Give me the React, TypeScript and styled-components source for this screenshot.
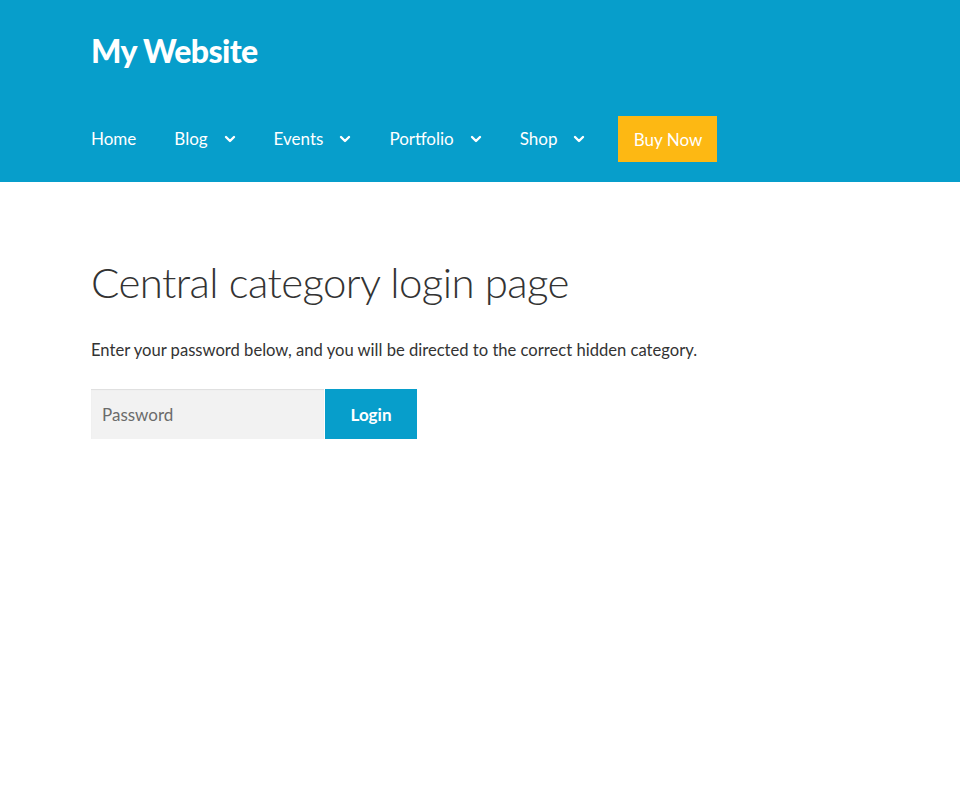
import styled, { createGlobalStyle } from "styled-components";

const GlobalStyle = createGlobalStyle`
    html, body {
        margin: 0;
        padding: 0;
        background: #ffffff;
        font-family: Lato, "Noto Sans", sans-serif;
        color: #333333;
    }
`;

const Header = styled.header`
    background: #079ecb;
    height: 182px;
    padding: 0 91px;
    box-sizing: border-box;
    display: flex;
    flex-direction: column;
`;

const SiteTitle = styled.h1`
    margin: 29px 0 0;
    height: 44px;
    font-size: 32px;
    line-height: 44px;
    font-weight: 900;
    letter-spacing: -0.6px;
    color: #ffffff;
`;

const Nav = styled.nav`
    display: flex;
    align-items: center;
    margin-top: 43px;
    height: 46px;
`;

const NavItem = styled.a`
    display: flex;
    align-items: center;
    color: #ffffff;
    font-size: 17px;
    line-height: 20px;
    text-decoration: none;
    margin-right: 38px;
    white-space: nowrap;
`;

const Caret = styled.svg`
    width: 12px;
    height: 12px;
    margin-left: 16px;
`;

const BuyButton = styled.a`
    display: flex;
    align-items: center;
    justify-content: center;
    width: 99px;
    height: 46px;
    background: #fdb813;
    color: #ffffff;
    font-size: 17px;
    text-decoration: none;
    margin-left: -5px;
`;

const Main = styled.main`
    padding: 0 91px;
`;

const PageTitle = styled.h2`
    margin: 72px 0 0;
    font-size: 42px;
    line-height: 56px;
    font-weight: 300;
    letter-spacing: -0.6px;
    color: #333333;
`;

const Intro = styled.p`
    margin: 28px 0 0;
    font-size: 16.6px;
    line-height: 24px;
    color: #333333;
`;

const LoginForm = styled.form`
    display: flex;
    margin-top: 27px;
`;

const PasswordInput = styled.input`
    width: 233px;
    height: 50px;
    box-sizing: border-box;
    border: none;
    background: #f2f2f2;
    box-shadow: inset 0 1px 1px rgba(0, 0, 0, 0.08);
    padding: 0 11px;
    font-family: inherit;
    font-size: 17px;
    color: #333333;
    outline: none;
    &::placeholder {
        color: #6b6b6b;
    }
`;

const LoginButton = styled.button`
    width: 92px;
    height: 50px;
    margin-left: 1px;
    border: none;
    background: #079ecb;
    color: #ffffff;
    font-family: inherit;
    font-size: 17px;
    font-weight: 700;
    cursor: pointer;
`;

const ChevronDown = () => (
    <Caret viewBox="0 0 12 12">
        <path d="M2 4 L6 8 L10 4" fill="none" stroke="#ffffff" strokeWidth="2.4" strokeLinecap="round" strokeLinejoin="round" />
    </Caret>
);

const menu = [
    { label: "Home", sub: false },
    { label: "Blog", sub: true },
    { label: "Events", sub: true },
    { label: "Portfolio", sub: true },
    { label: "Shop", sub: true }
];

const App = () => {
    return (
        <>
            <GlobalStyle />
            <Header>
                <SiteTitle>My Website</SiteTitle>
                <Nav>
                    {menu.map((item) => (
                        <NavItem key={item.label} href="#">
                            {item.label}
                            {item.sub && <ChevronDown />}
                        </NavItem>
                    ))}
                    <BuyButton href="#">Buy Now</BuyButton>
                </Nav>
            </Header>
            <Main>
                <PageTitle>Central category login page</PageTitle>
                <Intro>Enter your password below, and you will be directed to the correct hidden category.</Intro>
                <LoginForm onSubmit={(e) => e.preventDefault()}>
                    <PasswordInput type="password" placeholder="Password" />
                    <LoginButton type="submit">Login</LoginButton>
                </LoginForm>
            </Main>
        </>
    );
};

export default App;
